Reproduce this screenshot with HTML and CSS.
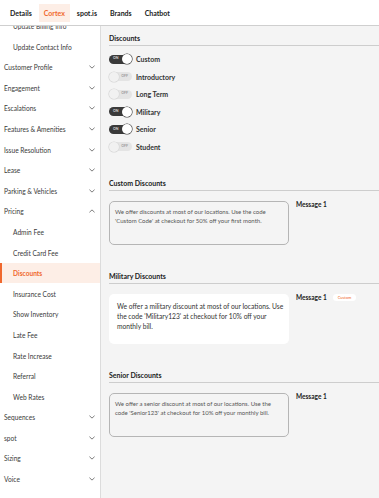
FILE: index.html
```html
<!DOCTYPE html>
<html>
<head>
<meta charset="utf-8">
<link rel="stylesheet" href="styles.css">
</head>
<body>
<div class="app">
  <header class="topbar">
    <span class="tab">Details</span>
    <span class="tab active">Cortex</span>
    <span class="tab">spot.is</span>
    <span class="tab">Brands</span>
    <span class="tab">Chatbot</span>
  </header>
  <div class="body">
    <nav class="sidebar">
      <ul class="navlist">
        <li class="nav sub">Update Billing Info</li>
        <li class="nav sub">Update Contact Info</li>
        <li class="nav">Customer Profile<svg class="chev" viewBox="0 0 7 4"><path d="M0.5 0.5 L3.5 3.3 L6.5 0.5"/></svg></li>
        <li class="nav">Engagement<svg class="chev" viewBox="0 0 7 4"><path d="M0.5 0.5 L3.5 3.3 L6.5 0.5"/></svg></li>
        <li class="nav">Escalations<svg class="chev" viewBox="0 0 7 4"><path d="M0.5 0.5 L3.5 3.3 L6.5 0.5"/></svg></li>
        <li class="nav">Features &amp; Amenities<svg class="chev" viewBox="0 0 7 4"><path d="M0.5 0.5 L3.5 3.3 L6.5 0.5"/></svg></li>
        <li class="nav">Issue Resolution<svg class="chev" viewBox="0 0 7 4"><path d="M0.5 0.5 L3.5 3.3 L6.5 0.5"/></svg></li>
        <li class="nav">Lease<svg class="chev" viewBox="0 0 7 4"><path d="M0.5 0.5 L3.5 3.3 L6.5 0.5"/></svg></li>
        <li class="nav">Parking &amp; Vehicles<svg class="chev" viewBox="0 0 7 4"><path d="M0.5 0.5 L3.5 3.3 L6.5 0.5"/></svg></li>
        <li class="nav">Pricing<svg class="chev" viewBox="0 0 7 4"><path d="M0.5 3.5 L3.5 0.7 L6.5 3.5"/></svg></li>
        <li class="nav sub">Admin Fee</li>
        <li class="nav sub">Credit Card Fee</li>
        <li class="nav sub selected">Discounts</li>
        <li class="nav sub">Insurance Cost</li>
        <li class="nav sub">Show Inventory</li>
        <li class="nav sub">Late Fee</li>
        <li class="nav sub">Rate Increase</li>
        <li class="nav sub">Referral</li>
        <li class="nav sub">Web Rates</li>
        <li class="nav">Sequences<svg class="chev" viewBox="0 0 7 4"><path d="M0.5 0.5 L3.5 3.3 L6.5 0.5"/></svg></li>
        <li class="nav">spot<svg class="chev" viewBox="0 0 7 4"><path d="M0.5 0.5 L3.5 3.3 L6.5 0.5"/></svg></li>
        <li class="nav">Sizing<svg class="chev" viewBox="0 0 7 4"><path d="M0.5 0.5 L3.5 3.3 L6.5 0.5"/></svg></li>
        <li class="nav">Voice<svg class="chev" viewBox="0 0 7 4"><path d="M0.5 0.5 L3.5 3.3 L6.5 0.5"/></svg></li>
      </ul>
    </nav>
    <main class="main">
      <section class="section first">
        <h2 class="section-title">Discounts</h2>
        <div class="toggles">
          <div class="toggle-row"><span class="toggle on"><span class="tlabel">ON</span><span class="knob"></span></span><span class="toggle-name">Custom</span></div>
          <div class="toggle-row"><span class="toggle off"><span class="knob"></span><span class="tlabel">OFF</span></span><span class="toggle-name">Introductory</span></div>
          <div class="toggle-row"><span class="toggle off"><span class="knob"></span><span class="tlabel">OFF</span></span><span class="toggle-name">Long Term</span></div>
          <div class="toggle-row"><span class="toggle on"><span class="tlabel">ON</span><span class="knob"></span></span><span class="toggle-name">Military</span></div>
          <div class="toggle-row"><span class="toggle on"><span class="tlabel">ON</span><span class="knob"></span></span><span class="toggle-name">Senior</span></div>
          <div class="toggle-row"><span class="toggle off"><span class="knob"></span><span class="tlabel">OFF</span></span><span class="toggle-name">Student</span></div>
        </div>
      </section>
      <section class="section">
        <h2 class="section-title">Custom Discounts</h2>
        <div class="msg-row">
          <div class="msg-box outline">We offer discounts at most of our locations. Use the code 'Custom Code' at checkout for 50% off your first month.</div>
          <div class="msg-label">Message 1</div>
        </div>
      </section>
      <section class="section">
        <h2 class="section-title">Military Discounts</h2>
        <div class="msg-row">
          <div class="msg-box filled">We offer a military discount at most of our locations. Use the code 'Military123' at checkout for 10% off your monthly bill.</div>
          <div class="msg-label">Message 1 <span class="badge">Custom</span></div>
        </div>
      </section>
      <section class="section">
        <h2 class="section-title">Senior Discounts</h2>
        <div class="msg-row">
          <div class="msg-box outline">We offer a senior discount at most of our locations. Use the code 'Senior123' at checkout for 10% off your monthly bill.</div>
          <div class="msg-label">Message 1</div>
        </div>
      </section>
    </main>
  </div>
</div>
</body>
</html>
```

FILE: styles.css
```css
* { box-sizing: border-box; }
html, body { margin: 0; padding: 0; }
body {
  font-family: Lato, "Liberation Sans", sans-serif;
  color: #333;
  background: #fff;
}
.app {
  display: flex;
  flex-direction: column;
  height: 498px;
  overflow: hidden;
}
.topbar {
  height: 26px;
  flex: none;
  display: flex;
  align-items: center;
  padding-left: 4px;
  gap: 1px;
  border-bottom: 1px solid #cfcfcf;
  background: #fff;
}
.tab {
  font-size: 7px;
  font-weight: 700;
  color: #222;
  padding: 0 6px;
  height: 18px;
  line-height: 18px;
}
.tab.active {
  background: #fdeee6;
  color: #f0682d;
  padding: 0 5px;
}
.body {
  flex: 1;
  display: flex;
  min-height: 0;
}
.sidebar {
  width: 101px;
  flex: none;
  border-right: 1px solid #dcdcdc;
  overflow: hidden;
  background: #fff;
}
.navlist {
  list-style: none;
  margin: -10.3px 0 0 0;
  padding: 0;
}
.nav {
  height: 20.6px;
  display: flex;
  align-items: center;
  justify-content: space-between;
  padding: 0 5px 0 4px;
  font-size: 6.6px;
  color: #3a3a3a;
}
.nav.sub { padding-left: 13px; }
.nav.selected {
  background: #fdeee6;
  color: #f0682d;
  font-weight: 700;
  box-shadow: inset 2px 0 0 #f0682d;
}
.chev {
  width: 6px;
  height: 4px;
  fill: none;
  stroke: #555;
  stroke-width: 0.9;
}
.main {
  flex: 1;
  background: #f4f4f4;
  padding: 7px 0 0 8px;
  overflow: hidden;
}
.section { margin-top: 26px; }
.section.first { margin-top: 0; }
.section-title {
  margin: 0;
  font-size: 7px;
  font-weight: 700;
  color: #222;
  line-height: 10px;
  padding-bottom: 2px;
  border-bottom: 1px solid #cdcdcd;
}
.toggles {
  display: flex;
  flex-direction: column;
  gap: 7.6px;
  margin-top: 8px;
}
.toggle-row {
  display: flex;
  align-items: center;
  height: 10px;
  gap: 4px;
}
.toggle {
  position: relative;
  width: 23px;
  height: 9px;
  border-radius: 5px;
  display: flex;
  align-items: center;
  flex: none;
}
.toggle.on { background: #3a3a3a; justify-content: space-between; padding-left: 4px; }
.toggle.off { background: #e4e4e4; justify-content: space-between; padding-right: 4px; }
.tlabel {
  font-size: 3.5px;
  font-weight: 700;
  line-height: 1;
}
.toggle.on .tlabel { color: #ddd; }
.toggle.off .tlabel { color: #999; }
.knob {
  width: 10px;
  height: 10px;
  border-radius: 50%;
  flex: none;
}
.toggle.on .knob { background: #fff; box-shadow: 0 0 0 0.6px #3a3a3a; }
.toggle.off .knob { background: #f1f1f1; box-shadow: 0 0 0 0.6px #d5d5d5; }
.toggle-name {
  font-size: 7px;
  font-weight: 700;
  color: #333;
}
.msg-row {
  display: flex;
  align-items: flex-start;
  gap: 7px;
  margin-top: 10px;
}
.msg-box {
  width: 180px;
  flex: none;
  border-radius: 5px;
}
.msg-box.outline {
  height: 44px;
  border: 1px solid #b5b5b5;
  padding: 5px 6px 0 5px;
  font-size: 6px;
  line-height: 9px;
  color: #555;
}
.msg-box.filled {
  height: 50px;
  background: #fff;
  padding: 7px 0 0 8px;
  font-size: 6.7px;
  line-height: 10px;
  color: #333;
}
.msg-label {
  font-size: 6.5px;
  font-weight: 700;
  color: #222;
  line-height: 7px;
  display: flex;
  align-items: center;
  gap: 6px;
}
.badge {
  background: #fff;
  color: #f0682d;
  font-size: 4px;
  font-weight: 400;
  padding: 1px 5px;
  border-radius: 4px;
  line-height: 5px;
}
```
